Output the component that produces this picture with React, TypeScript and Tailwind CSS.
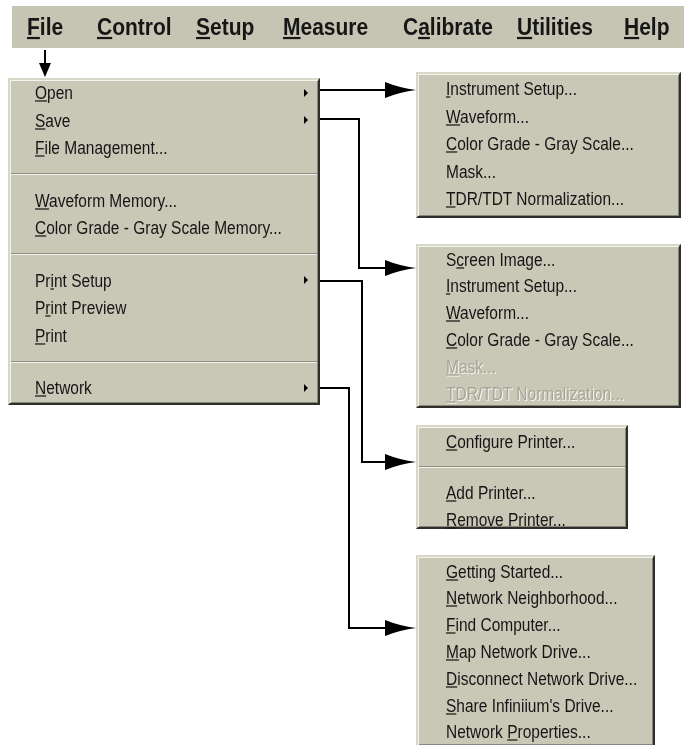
import React from 'react';

type Entry = { label: string; u?: number; sub?: boolean; off?: boolean } | 'sep';

const bar = [
  { label: 'File', u: 0, w: 'w-[70px]' },
  { label: 'Control', u: 0, w: 'w-[99px]' },
  { label: 'Setup', u: 0, w: 'w-[87px]' },
  { label: 'Measure', u: 0, w: 'w-[120px]' },
  { label: 'Calibrate', u: 1, w: 'w-[114px]' },
  { label: 'Utilities', u: 0, w: 'w-[107px]' },
  { label: 'Help', u: 0, w: 'w-[50px]' },
];

const fileMenu: Entry[] = [
  { label: 'Open', u: 0, sub: true },
  { label: 'Save', u: 0, sub: true },
  { label: 'File Management...', u: 0 },
  'sep',
  { label: 'Waveform Memory...', u: 0 },
  { label: 'Color Grade - Gray Scale Memory...', u: 0 },
  'sep',
  { label: 'Print Setup', u: 2, sub: true },
  { label: 'Print Preview', u: 1 },
  { label: 'Print', u: 0 },
  'sep',
  { label: 'Network', u: 0, sub: true },
];

const openMenu: Entry[] = [
  { label: 'Instrument Setup...', u: 0 },
  { label: 'Waveform...', u: 0 },
  { label: 'Color Grade - Gray Scale...', u: 0 },
  { label: 'Mask...' },
  { label: 'TDR/TDT Normalization...', u: 0 },
];

const saveMenu: Entry[] = [
  { label: 'Screen Image...', u: 1 },
  { label: 'Instrument Setup...', u: 0 },
  { label: 'Waveform...', u: 0 },
  { label: 'Color Grade - Gray Scale...', u: 0 },
  { label: 'Mask...', u: 0, off: true },
  { label: 'TDR/TDT Normalization...', u: 0, off: true },
];

const printMenu: Entry[] = [
  { label: 'Configure Printer...', u: 0 },
  'sep',
  { label: 'Add Printer...', u: 0 },
  { label: 'Remove Printer...', u: 0 },
];

const netMenu: Entry[] = [
  { label: 'Getting Started...', u: 0 },
  { label: 'Network Neighborhood...', u: 0 },
  { label: 'Find Computer...', u: 0 },
  { label: 'Map Network Drive...', u: 0 },
  { label: 'Disconnect Network Drive...', u: 0 },
  { label: "Share Infiniium's Drive...", u: 0 },
  { label: 'Network Properties...', u: 8 },
];

const Label = ({ text, u, line }: { text: string; u?: number; line?: string }) => {
  if (u === undefined) return <>{text}</>;
  return (
    <>
      {text.slice(0, u)}
      <span className={`underline ${line ?? 'underline-offset-[1px] decoration-1'}`}>{text[u]}</span>
      {text.slice(u + 1)}
    </>
  );
};

const Menu = ({
  items,
  className,
  itemH,
  pl = 'pl-[28px]',
  inner = '',
}: {
  items: Entry[];
  className: string;
  itemH: string;
  pl?: string;
  inner?: string;
}) => (
  <div
    className={`bg-[#c9c8b7] border-2 border-t-[#d8d7c8] border-l-[#d8d7c8] border-r-[#2e2e2a] border-b-[#2e2e2a] shadow-[inset_1px_1px_0_#f4f4ee,inset_-1px_-1px_0_#86867c] ${className}`}
  >
    <div className={inner}>
      {items.map((it, i) =>
        it === 'sep' ? (
          <div key={i} className="flex h-[25px] items-center px-[1px]">
            <div className="w-full border-t border-b border-t-[#8c8c80] border-b-[#f4f4ee]" />
          </div>
        ) : (
          <div
            key={i}
            className={`flex ${itemH} items-center justify-between ${pl} pr-[10px] text-[15.5px] leading-none whitespace-nowrap ${
              it.off ? 'text-[#a5a598] [text-shadow:1px_1px_0_#f6f6f0]' : 'text-[#151515]'
            }`}
          >
            <span className="inline-block scale-y-[1.22]">
              <Label text={it.label} u={it.u} />
            </span>
            {it.sub && <span className="h-0 w-0 border-y-[4px] border-l-[4px] border-y-transparent border-l-black" />}
          </div>
        )
      )}
    </div>
  </div>
);

// connector arrow head pointing right with its tip at (x, y)
const Head = ({ x, y }: { x: number; y: number }) => (
  <path d={`M${x} ${y} Q${x - 16} ${y - 2} ${x - 31} ${y - 8} L${x - 31} ${y + 8} Q${x - 16} ${y + 2} ${x} ${y} Z`} fill="#000" />
);

export default function App() {
  return (
    <div className="relative h-[745px] w-[684px] overflow-hidden bg-white font-['Liberation_Sans',Arial,sans-serif]">
      <div className="ml-[12px] mt-[6px] flex h-[42px] items-center bg-[#c6c5b3] pl-[15px] text-[21px] font-bold text-[#161616]">
        {bar.map((b) => (
          <span key={b.label} className={`${b.w} inline-block shrink-0 scale-y-[1.1] whitespace-nowrap`}>
            <Label text={b.label} u={b.u} line="underline-offset-[2px] decoration-2" />
          </span>
        ))}
      </div>

      <div className="flex">
        <Menu
          items={fileMenu}
          className="ml-[8px] mt-[30px] h-[327px] w-[312px] pt-[1px]"
          itemH="h-[27.5px]"
          pl="pl-[25px]"
          inner="-mt-[2px]"
        />

        <div className="ml-[96px] mt-[24px] flex flex-col">
          <Menu items={openMenu} className="h-[146px] w-[265px] pt-[1px]" itemH="h-[27.5px]" />
          <Menu items={saveMenu} className="mt-[26px] h-[164px] w-[265px] border-t-[#111]" itemH="h-[26.8px]" />
          <Menu items={printMenu} className="mt-[17px] h-[104px] w-[212px] pt-[1px]" itemH="h-[26.8px]" />
          <Menu items={netMenu} className="mt-[26px] h-[192px] w-[239px] pt-[1px]" itemH="h-[26.8px]" />
        </div>
      </div>

      <svg className="pointer-events-none absolute left-0 top-0" width="684" height="745">
        <g fill="none" stroke="#000" strokeWidth="2">
          <path d="M45 50 V66" />
          <path d="M320 90 H390" />
          <path d="M320 119 H359 V268 H390" />
          <path d="M320 281 H362 V462 H390" />
          <path d="M320 388 H349 V628 H390" />
        </g>
        <path d="M45 77 L39 63 L51 63 Z" fill="#000" />
        <Head x={416} y={90} />
        <Head x={416} y={268} />
        <Head x={416} y={462} />
        <Head x={416} y={628} />
      </svg>
    </div>
  );
}
